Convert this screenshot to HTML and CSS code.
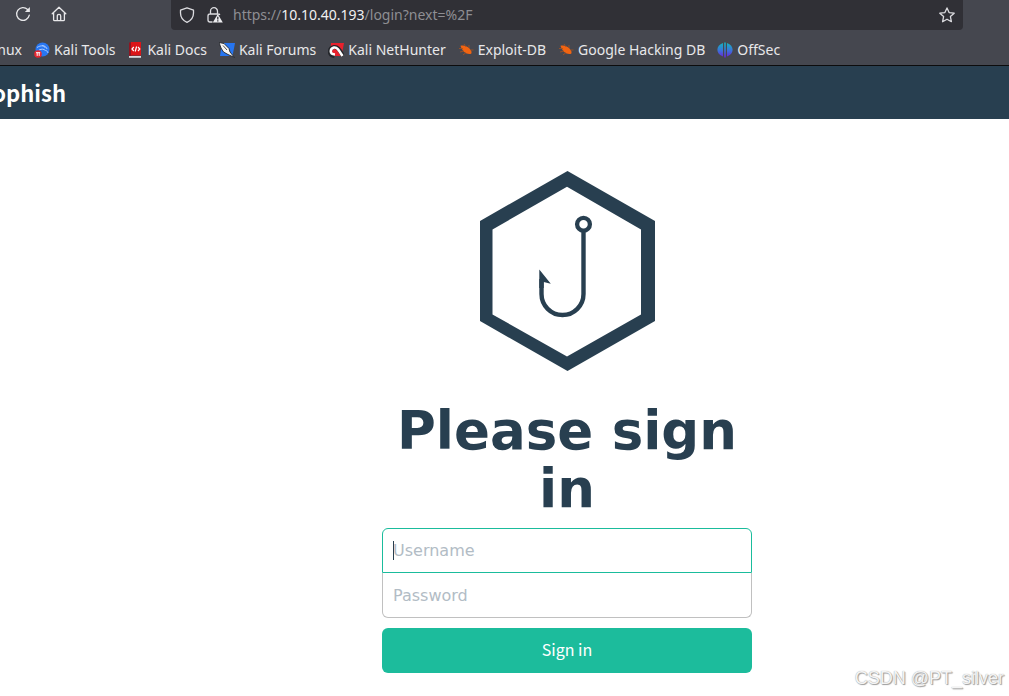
FILE: index.html
```
<!DOCTYPE html>
<html lang="en">
<head>
<meta charset="utf-8">
<title>Gophish</title>
<link rel="stylesheet" href="styles.css">
</head>
<body>
<div class="browser">
  <div class="toolbar">
    <button class="tool" type="button" aria-label="Reload">
      <svg width="16" height="16" viewBox="0 0 16 16" fill="none" stroke="#e8e8ea" stroke-width="1.3" stroke-linecap="round"><path d="M14.300 9.200A6.400 6.400 0 1 1 12.600 3.500"/><path d="M14.900 1v5h-5z" fill="#e8e8ea" stroke="none"/></svg>
    </button>
    <button class="tool" type="button" aria-label="Home">
      <svg width="16" height="16" viewBox="0 0 16 16" fill="none" stroke="#e8e8ea" stroke-width="1.3" stroke-linecap="round" stroke-linejoin="round"><path d="M1.200 7.800 8 1.200l6.800 6.600M2.600 7v6.700q0 1 1 1h8.800q1 0 1-1V7M6.300 14.400V10q0-1.700 1.700-1.700T9.700 10v4.400"/></svg>
    </button>
    <div class="address">
      <svg width="16" height="16" viewBox="0 0 16 16" fill="none" stroke="#dcdce0" stroke-width="1.300" stroke-linejoin="round"><path d="M8 .8 14.500 3.200V6c0 4.200-2 7.300-6.500 9.300C3.500 13.300 1.500 10.200 1.500 6V3.200z"/></svg>
      <svg width="18" height="16" viewBox="0 0 18 16"><g fill="none" stroke="#dcdce0" stroke-width="1.300"><path d="M5.500 7V4.200a3.500 3.500 0 0 1 7 0V7M7.500 15H5q-2 0-2-2V9q0-2 2-2h8q1.500 0 1.800 1"/></g><path d="M12.800 7 17.800 15.600H7.800z" fill="#ededf0"/><path d="M12.800 9.800v2.600M12.800 13.300v1.200" stroke="#303036" stroke-width="1.300"/></svg>
      <span class="url">https://<b>10.10.40.193</b>/login?next=%2F</span>
      <button class="tool star" type="button" aria-label="Bookmark this page">
        <svg width="16" height="16" viewBox="0 0 16 16" fill="none" stroke="#dcdce0" stroke-width="1.300" stroke-linejoin="round"><path d="m8 .9 2.100 4.700 5.100.6-3.800 3.400 1 5.100L8 12.200l-4.400 2.500 1-5.100L.8 6.200l5.100-.6z"/></svg>
      </button>
    </div>
  </div>
  <nav class="bookmarks" aria-label="Bookmarks">
    <a href="#">nux</a>
    <a href="#"><svg width="16" height="16" viewBox="0 0 16 16"><circle cx="8.500" cy="7.500" r="7" fill="#2877f2"/><path d="M3 5.500c4-2.500 7-2 8.500.5M5 8c3-1.300 4.500-1 6.500.5 1.500.2 2 1 2.500 2.500M8 3.500c3 .3 4.500 1.500 5 3.500" fill="none" stroke="#a9c9ff" stroke-width="1"/><circle cx="4" cy="12" r="3.800" fill="#e62730"/><path d="M2 10.700h4.200M3.200 10.700v3.200M5.200 10.700v3.200" stroke="#fff" stroke-width="1"/></svg>Kali Tools</a>
    <a href="#"><svg width="16" height="16" viewBox="0 0 16 16"><path d="M2 .5h2.500v14H2z" fill="#8f1622"/><path d="M4 0h10v13.500H4z" fill="#db1518"/><path d="M2 14h12v1.800H2z" fill="#d7dce0"/><path d="M6.800 5 5 7l1.800 2M11 5l1.800 2L11 9M9.600 4.500l-1.400 5" fill="none" stroke="#fff" stroke-width="1.200"/></svg>Kali Docs</a>
    <a href="#"><svg width="16" height="16" viewBox="0 0 16 16"><path d="M3 1h13l-2.500 13H1z" fill="#2675f0"/><path d="M0 .5 5 1.500l5 5 1 3.500 4.500 5.500L9 12.500 4.500 10 2 6z" fill="#f6f6f4" stroke="#24262b" stroke-width=".9"/><path d="m4 3.500 4 4.500" stroke="#24262b" stroke-width=".8"/></svg>Kali Forums</a>
    <a href="#"><svg width="16" height="16" viewBox="0 0 16 16"><path d="M3 1h13l-2.500 13H2z" fill="#e8212d"/><path d="M6.500 14C0 13 .8 6 6 5c3-.5 5 1.500 9 9" fill="none" stroke="#24262b" stroke-width="4"/><path d="M7 12.500C1 12 2 6.500 6 5.500c3-.5 4.500 2 8.500 8.500" fill="none" stroke="#fff" stroke-width="2.500"/></svg>Kali NetHunter</a>
    <a href="#"><svg width="16" height="16" viewBox="0 0 16 16"><path d="M2.500 3.800C7 2.500 11 5 13 8.500c1 2 .7 3.300-.8 3.500C8 12.500 4 9 2.500 3.800z" fill="#f26411"/><path d="M1 6.500h4M2 10l4-1M5 13l3-2.500M6 2l2 3M11 3l0 3M15.500 8h-3" stroke="#a8521f" stroke-width=".8"/></svg>Exploit-DB</a>
    <a href="#"><svg width="16" height="16" viewBox="0 0 16 16"><path d="M2.500 3.800C7 2.500 11 5 13 8.500c1 2 .7 3.300-.8 3.500C8 12.500 4 9 2.500 3.800z" fill="#f26411"/><path d="M1 6.500h4M2 10l4-1M5 13l3-2.500M6 2l2 3M11 3l0 3M15.500 8h-3" stroke="#a8521f" stroke-width=".8"/></svg>Google Hacking DB</a>
    <a href="#"><svg width="16" height="16" viewBox="0 0 16 16"><defs><linearGradient id="offsec" x1="0" y1="0" x2="0" y2="1"><stop offset="0" stop-color="#12b5bd"/><stop offset=".5" stop-color="#3778d8"/><stop offset="1" stop-color="#6c22d9"/></linearGradient></defs><path d="M6 1v13.500C-1.500 12-1.500 3.500 6 1zM7.200.5h1.600v15H7.200zM10 1c7.500 2.500 7.500 11 0 13.500z" fill="url(#offsec)"/></svg>OffSec</a>
  </nav>
</div>
<header class="site-header"><a class="brand" href="#">ophish</a></header>
<main class="login">
  <form class="signin">
    <svg class="logo" width="175" height="200" viewBox="0 0 175 200" role="img" aria-label="Gophish"><path fill="#283f50" fill-rule="evenodd" d="M87.500 0 175 50V150L87.500 200 0 150V50zM87 15.700 12.500 58.500V143.500L87 185.500 161 143.500V58.500z"/><circle cx="103.500" cy="53.300" r="6.400" fill="none" stroke="#283f50" stroke-width="4.300"/><path d="M103.500 60V123a21 21 0 0 1-42 0V108" fill="none" stroke="#283f50" stroke-width="4.400"/><path d="M59.300 98.500 70.800 112.800 63.700 111V117H59.300z" fill="#283f50"/></svg>
    <h1 class="title">Please sign in</h1>
    <div class="fields">
      <label class="field-row active"><input class="field username" type="text" placeholder="Username" aria-label="Username"></label>
      <label class="field-row"><input class="field password" type="password" placeholder="Password" aria-label="Password"></label>
    </div>
    <button class="submit" type="submit">Sign in</button>
  </form>
</main>
<div class="watermark">CSDN @PT_silver</div>
</body>
</html>
```
FILE: styles.css
```
* { box-sizing: border-box; }
body {
  margin: 0;
  min-height: 100vh;
  overflow: hidden;
  background: #fff;
  color: #283f50;
  font-family: "Noto Sans CJK SC", sans-serif;
}
.browser {
  background: #45474f;
  border-bottom: 1px solid #0c0c0d;
  color: #e8e8ea;
  font: 14px/20px "Noto Sans", sans-serif;
}
.toolbar {
  display: flex;
  align-items: flex-start;
  gap: 20px;
  height: 34px;
  padding: 0 46px 0 15px;
}
.tool {
  display: flex;
  margin: 0;
  padding: 6px 0 0;
  border: 0;
  background: none;
}
.address {
  flex: 1;
  display: flex;
  align-items: center;
  gap: 10px;
  height: 30px;
  margin-left: 84px;
  padding: 0 8px;
  border-radius: 0 0 4px 4px;
  background: #303036;
}
.url { color: #8e8e93; }
.url b { color: #f0f0f2; font-weight: 400; }
.star { margin-left: auto; padding: 0; }
.bookmarks {
  display: flex;
  gap: 12px;
  height: 31px;
  padding-top: 6px;
  overflow: hidden;
  white-space: nowrap;
}
.bookmarks a {
  display: flex;
  flex-shrink: 0;
  align-items: center;
  gap: 4px;
  height: 20px;
  color: inherit;
  text-decoration: none;
}
.bookmarks a:first-child { width: 22px; justify-content: flex-end; }
.site-header {
  display: flex;
  align-items: center;
  height: 53px;
  padding-bottom: 2px;
  overflow: hidden;
  background: #283f50;
}
.brand {
  display: flex;
  justify-content: flex-end;
  width: 66px;
  color: #fff;
  font-size: 22px;
  font-weight: 700;
  line-height: 32px;
  text-decoration: none;
}
.login { padding: 52px 0 0 125px; }
.signin {
  display: flex;
  flex-direction: column;
  max-width: 370px;
  margin: 0 auto;
}
.logo { align-self: center; }
.title {
  margin: 31px 0 10px;
  font: 700 53px/58px "DejaVu Sans", sans-serif;
  text-align: center;
}
.fields { display: flex; flex-direction: column; margin-bottom: 10px; }
.field-row { display: flex; position: relative; }
.active::after {
  content: "";
  position: absolute;
  top: 13px;
  left: 11px;
  width: 1px;
  height: 19px;
  background: #283f50;
}
.field {
  width: 100%;
  height: 45px;
  padding: 0 10px;
  border: 1px solid #c0c0c0;
  background: #fff;
  color: #283f50;
  font: 16px/24px "DejaVu Sans", sans-serif;
  outline: 0;
}
.field::placeholder { color: #b2bcc5; opacity: 1; }
.username { border-color: #1abc9c; border-radius: 6px 6px 0 0; }
.password { border-top: 0; border-radius: 0 0 6px 6px; }
.submit {
  height: 45px;
  padding: 0 0 3px;
  border: 0;
  border-radius: 6px;
  background: #1cbc9c;
  color: #fff;
  font: 16px/24px "Noto Sans CJK SC", sans-serif;
}
.watermark {
  position: absolute;
  right: 5px;
  bottom: 6px;
  color: #f4f4f4;
  font: 18px/24px "Liberation Sans", sans-serif;
  text-shadow: 1px 1px 1px #999, 0 0 1px #999;
}
```
